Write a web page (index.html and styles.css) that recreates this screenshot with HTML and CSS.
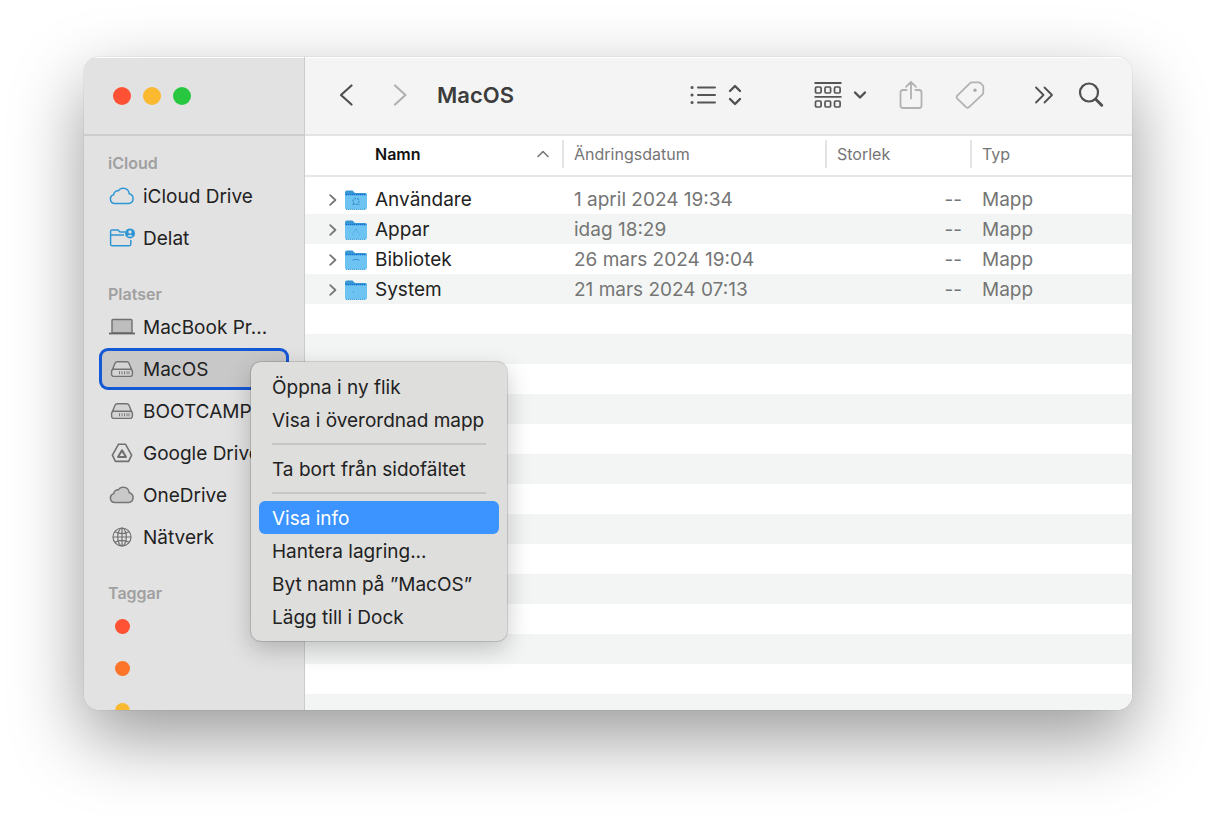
FILE: index.html
```html
<!DOCTYPE html>
<html lang="sv">
<head>
<meta charset="utf-8">
<meta name="viewport" content="width=device-width, initial-scale=1">
<title>MacOS</title>
<link rel="stylesheet" href="styles.css">
</head>
<body>
<svg class="defs" width="0" height="0" aria-hidden="true">
  <symbol id="drive" viewBox="0 0 24 18">
    <path d="M5.8 1.8h12.4l3.6 8.2H2.2zM3.6 9.5h16.8a2 2 0 0 1 2 2v3a2 2 0 0 1-2 2H3.6a2 2 0 0 1-2-2v-3a2 2 0 0 1 2-2z" fill="#d4d4d4" stroke="none"/>
    <path d="M1.8 11 5 3.2C5.4 2.3 6.2 1.8 7.2 1.8h9.6c1 0 1.8.5 2.2 1.4L22.2 11M3.8 9.2h16.4a2.2 2.2 0 0 1 2.2 2.2v2.8a2.2 2.2 0 0 1-2.2 2.2H3.8a2.2 2.2 0 0 1-2.2-2.2v-2.8a2.2 2.2 0 0 1 2.2-2.2z" fill="none" stroke="#727272" stroke-width="1.4"/>
    <path d="M9.5 11.3v3M12 11.3v3M14.5 11.3v3M17 11.3v3M19 11.3v3" stroke="#777" stroke-width="1"/>
  </symbol>
  <symbol id="cloud" viewBox="0 0 26 18">
    <path d="M6 16.6a4.6 4.6 0 0 1-1.3-9 4 4 0 0 1 4.5-3.7 6 6 0 0 1 11 2.9A5 5 0 0 1 19.9 16.6z" stroke-width="1.5" stroke-linejoin="round"/>
  </symbol>
  <symbol id="folder" viewBox="0 0 22 21">
    <path d="M0 2.5Q0 .5 2 .5h5.5L10 3h10q2 0 2 2v3H0z" fill="#3697d4"/>
    <path d="M0 5.2h22v12.6a2 2 0 0 1-2 2H2a2 2 0 0 1-2-2z" fill="#6dc3f2"/>
    <path d="M1 4.6h20" stroke="#1265d8" stroke-width="1" stroke-dasharray="1 1"/>
    <path d="M1 19.3h20" stroke="#419bd3" stroke-width="1" stroke-dasharray="1 1"/>
  </symbol>
  <symbol id="chevron" viewBox="0 0 8 12">
    <path d="m1.2 1.2 5.2 4.8-5.2 4.8" fill="none" stroke="#777" stroke-width="1.8" stroke-linecap="round" stroke-linejoin="round"/>
  </symbol>
</svg>

<main class="window">
  <aside class="sidebar">
    <div class="sidebar-top">
      <button class="light red" aria-label="Stäng"></button>
      <button class="light yellow" aria-label="Minimera"></button>
      <button class="light green" aria-label="Zooma"></button>
    </div>
    <nav class="places">
      <section class="group">
        <h2>iCloud</h2>
        <button class="place"><svg class="place-icon" width="26" height="18" fill="none" stroke="#2f96d6"><use href="#cloud"/></svg><span>iCloud Drive</span></button>
        <button class="place"><svg class="place-icon" width="26" height="20" viewBox="0 0 26 20" fill="none" stroke="#2f96d6" stroke-width="1.5">
          <path d="M16 4H11L9 2H3.200q-1.600 0-1.600 1.600v12.600q0 1.600 1.600 1.600h17q1.600 0 1.600-1.600V12M1.600 7H15"/>
          <circle cx="21" cy="5.400" r="5" fill="#2f96d6" stroke="none"/><circle cx="21" cy="3.900" r="1.600" fill="#e2e2e2" stroke="none"/><path d="M18.200 8.400q2.800-3.400 5.600 0z" fill="#e2e2e2" stroke="none"/></svg><span>Delat</span></button>
      </section>
      <section class="group">
        <h2>Platser</h2>
        <button class="place"><svg class="place-icon" width="28" height="18" viewBox="0 0 28 18"><path d="M4 2.500q0-1 1-1h18q1 0 1 1V15H4z" fill="#bdbdbd" stroke="#707070" stroke-width="1.400"/><path d="M1 15.500h26" stroke="#666" stroke-width="1.800"/></svg><span>MacBook Pr...</span></button>
        <button class="place selected"><svg class="place-icon" width="24" height="18"><use href="#drive"/></svg><span>MacOS</span></button>
        <button class="place"><svg class="place-icon" width="24" height="18"><use href="#drive"/></svg><span>BOOTCAMP</span></button>
        <button class="place"><svg class="place-icon" width="22" height="20" viewBox="0 0 22 20" fill="none" stroke="#707070" stroke-width="1.600" stroke-linejoin="round"><path d="M7.600 1.200h6.800l6.200 11-3 6.200H4.400l-3-6.200z"/><path d="m11 7.200 4 6.800H7z" stroke-width="2"/></svg><span>Google Drive</span></button>
        <button class="place"><svg class="place-icon" width="26" height="18" fill="#c9c9c9" stroke="#757575"><use href="#cloud"/></svg><span>OneDrive</span></button>
        <button class="place"><svg class="place-icon" width="20" height="20" viewBox="0 0 20 20" fill="none" stroke="#707070" stroke-width="1.200"><circle cx="10" cy="10" r="9"/><ellipse cx="10" cy="10" rx="4.300" ry="9"/><path d="M10 1v18M1 10h18M3 4.800q7 3.600 14 0M3 15.200q7-3.600 14 0"/></svg><span>Nätverk</span></button>
      </section>
      <section class="group">
        <h2>Taggar</h2>
        <button class="place" aria-label="Röd"><i class="tag tag-red"></i></button>
        <button class="place" aria-label="Orange"><i class="tag tag-orange"></i></button>
        <button class="place" aria-label="Gul"><i class="tag tag-yellow"></i></button>
      </section>
    </nav>
  </aside>

  <section class="content">
    <header class="toolbar">
      <button class="tool" aria-label="Bakåt"><svg width="14" height="24" viewBox="0 0 14 24" fill="none" stroke="#505050" stroke-width="2.200" stroke-linecap="round" stroke-linejoin="round"><path d="M12.500 2.500 2 12l10.500 9.500"/></svg></button>
      <button class="tool" aria-label="Framåt"><svg width="14" height="24" viewBox="0 0 14 24" fill="none" stroke="#b0b0b0" stroke-width="2.200" stroke-linecap="round" stroke-linejoin="round"><path d="m2 2.500 10.500 9.500L2 21.500"/></svg></button>
      <h1>MacOS</h1>
      <button class="tool view" aria-label="Visa som lista">
        <svg width="26" height="22" viewBox="0 0 26 22" stroke="#555" stroke-width="2" stroke-linecap="round"><path d="M8 3.500h17M8 11h17M8 18.500h17"/><path d="M2 3.500h.1M2 11h.1M2 18.500h.1" stroke-width="3"/></svg>
        <svg width="14" height="22" viewBox="0 0 14 22" fill="none" stroke="#505050" stroke-width="2.400" stroke-linecap="round" stroke-linejoin="round"><path d="m2 7 5-5 5 5M2 15l5 5 5-5"/></svg>
      </button>
      <button class="tool arrange" aria-label="Gruppera">
        <svg width="28" height="28" viewBox="0 0 28 28" fill="none" stroke="#555" stroke-width="1.700"><path d="M.5 2h27M.5 15.800h27" stroke-width="1.800"/><rect x="1.500" y="6" width="5.600" height="6" rx="1.200"/><rect x="11" y="6" width="5.600" height="6" rx="1.200"/><rect x="20.500" y="6" width="5.600" height="6" rx="1.200"/><rect x="1.500" y="20" width="5.600" height="6" rx="1.200"/><rect x="11" y="20" width="5.600" height="6" rx="1.200"/><rect x="20.500" y="20" width="5.600" height="6" rx="1.200"/></svg>
        <svg width="14" height="10" viewBox="0 0 14 10" fill="none" stroke="#505050" stroke-width="2.400" stroke-linecap="round" stroke-linejoin="round"><path d="m2 2.500 5 5 5-5"/></svg>
      </button>
      <button class="tool share" aria-label="Dela"><svg width="24" height="30" viewBox="0 0 24 30" fill="none" stroke="#b2b2b2" stroke-width="1.800" stroke-linecap="round" stroke-linejoin="round"><path d="M7.500 10H4q-2.500 0-2.500 2.500v13Q1.500 28 4 28h16q2.500 0 2.500-2.500v-13Q22.500 10 20 10h-3.500M12 18.500V1.800M7 6.800l5-5 5 5"/></svg></button>
      <button class="tool tagging" aria-label="Taggar"><svg width="30" height="30" viewBox="0 0 30 30" fill="none" stroke="#b2b2b2" stroke-width="1.800" stroke-linejoin="round"><path d="M14.800 3.300q1-1 2.400-1h6.500q1 0 1.700.7l2.100 2.200q.8.800.8 2v5q0 1.400-1 2.400L14 27.200q-1.500 1.400-3 0L2.300 18.700q-1.400-1.500 0-3z"/><circle cx="20" cy="10.200" r="1.700" fill="#aaa" stroke="none"/></svg></button>
      <button class="tool more" aria-label="Mer"><svg width="20" height="18" viewBox="0 0 20 18" fill="none" stroke="#505050" stroke-width="1.800" stroke-linecap="round" stroke-linejoin="round"><path d="m2 1.500 7.500 7.500L2 16.500M10.500 1.500 18 9l-7.500 7.500"/></svg></button>
      <button class="tool search" aria-label="Sök"><svg width="26" height="26" viewBox="0 0 26 26" fill="none" stroke="#505050" stroke-width="2.200" stroke-linecap="round"><circle cx="11" cy="10.500" r="9"/><path d="m17.700 17.200 6 6" stroke-width="3"/></svg></button>
    </header>

    <div class="list">
      <table>
        <colgroup><col class="col-name"><col class="col-date"><col class="col-size"><col></colgroup>
        <thead>
          <tr>
            <th class="name" aria-sort="ascending"><div class="head"><span>Namn</span><svg width="12" height="8" viewBox="0 0 12 8" fill="none" stroke="#777" stroke-width="1.600" stroke-linecap="round" stroke-linejoin="round"><path d="m1 6.500 5-5 5 5"/></svg></div></th>
            <th><div class="head">Ändringsdatum</div></th>
            <th><div class="head">Storlek</div></th>
            <th><div class="head">Typ</div></th>
          </tr>
        </thead>
        <tbody>
          <tr><td><div class="file"><button class="disclose" aria-label="Visa innehåll i Användare"><svg width="8" height="12"><use href="#chevron"/></svg></button><svg width="22" height="21" viewBox="0 0 22 21"><use href="#folder"/><path d="M7.500 14.500H10q-2-1.500-2-3.200a3 3 0 0 1 6 0q0 1.700-2 3.200h2.500" fill="none" stroke="#3a91cc" stroke-width="1.200" stroke-dasharray="2 1"/></svg><span>Användare</span></div></td><td>1 april 2024 19:34</td><td class="size">--</td><td>Mapp</td></tr>
          <tr><td><div class="file"><button class="disclose" aria-label="Visa innehåll i Appar"><svg width="8" height="12"><use href="#chevron"/></svg></button><svg width="22" height="21" viewBox="0 0 22 21"><use href="#folder"/><path d="m11 9-3.500 5.500M11 9l3.500 5.500" fill="none" stroke="#3a91cc" stroke-width="1" stroke-dasharray="1 2"/></svg><span>Appar</span></div></td><td>idag 18:29</td><td class="size">--</td><td>Mapp</td></tr>
          <tr><td><div class="file"><button class="disclose" aria-label="Visa innehåll i Bibliotek"><svg width="8" height="12"><use href="#chevron"/></svg></button><svg width="22" height="21" viewBox="0 0 22 21"><use href="#folder"/><path d="M7.500 10.500 9 9.500h4l1.500 1" fill="none" stroke="#3a91cc" stroke-width="1"/></svg><span>Bibliotek</span></div></td><td>26 mars 2024 19:04</td><td class="size">--</td><td>Mapp</td></tr>
          <tr><td><div class="file"><button class="disclose" aria-label="Visa innehåll i System"><svg width="8" height="12"><use href="#chevron"/></svg></button><svg width="22" height="21" viewBox="0 0 22 21"><use href="#folder"/><path d="M8 12h1" stroke="#3a91cc"/></svg><span>System</span></div></td><td>21 mars 2024 07:13</td><td class="size">--</td><td>Mapp</td></tr>
        </tbody>
      </table>
    </div>
  </section>

  <div class="menu" role="menu">
    <button role="menuitem">Öppna i ny flik</button>
    <button role="menuitem">Visa i överordnad mapp</button>
    <hr>
    <button role="menuitem">Ta bort från sidofältet</button>
    <hr>
    <button role="menuitem" class="active">Visa info</button>
    <button role="menuitem">Hantera lagring...</button>
    <button role="menuitem">Byt namn på ”MacOS”</button>
    <button role="menuitem">Lägg till i Dock</button>
  </div>
</main>
</body>
</html>
```
FILE: styles.css
```css
* { box-sizing: border-box; }

body {
  margin: 0;
  min-height: 100vh;
  padding: 57px 84px 110px;
  display: flex;
  background: #fff;
  color: #222;
  font-family: Inter, "Liberation Sans", sans-serif;
  font-size: 19px;
  line-height: 30px;
}

button {
  margin: 0;
  padding: 0;
  border: 0;
  background: none;
  color: inherit;
  font: inherit;
}

svg { display: block; flex: none; }
.defs { position: absolute; }

.window {
  position: relative;
  flex: 1;
  min-width: 0;
  display: flex;
  border-radius: 15px;
  box-shadow: 0 0 1px rgba(0, 0, 0, .4), 0 28px 72px rgba(0, 0, 0, .4);
}

/* Sidebar */
.sidebar {
  flex: none;
  width: 221px;
  display: flex;
  flex-direction: column;
  overflow: hidden;
  background: #e2e2e2;
  border-right: 1px solid #cbcbcb;
  border-radius: 15px 0 0 15px;
}

.sidebar-top {
  flex: none;
  height: 79px;
  padding-left: 29px;
  display: flex;
  align-items: center;
  gap: 12px;
  border-top: 1px solid #fff;
  border-bottom: 2px solid #cdcdcd;
}

.light {
  width: 18px;
  height: 18px;
  border-radius: 50%;
}
.red { background: #ff5234; }
.yellow { background: #fab92f; }
.green { background: #27c840; }

.places {
  flex: 1 1 0;
  min-height: 0;
  overflow: hidden;
  padding: 15px 15px 0;
  display: flex;
  flex-direction: column;
  gap: 23px;
}

.group h2 {
  margin: 0;
  padding-left: 9px;
  font-size: 16px;
  font-weight: 600;
  line-height: 24px;
  color: #a0a0a0;
}

.place {
  width: 100%;
  height: 42px;
  padding-left: 8px;
  display: grid;
  grid-template-columns: 30px 1fr;
  align-items: center;
  gap: 6px;
  text-align: left;
  white-space: nowrap;
}

.place span { padding-top: 2px; }

.place-icon, .tag { justify-self: center; }

.selected {
  background: #c8c8c8;
  border-radius: 9px;
  box-shadow: inset 0 0 0 3px #1558d6;
}

.tag {
  width: 15px;
  height: 15px;
  border-radius: 50%;
}
.tag-red { background: #ff5234; }
.tag-orange { background: #fc7529; }
.tag-yellow { background: #fab92f; }

/* Toolbar */
.content {
  flex: 1;
  min-width: 0;
  display: flex;
  flex-direction: column;
  overflow: hidden;
  background: #fff;
  border-radius: 0 15px 15px 0;
}

.toolbar {
  flex: none;
  height: 79px;
  padding: 0 24px 2px;
  display: flex;
  align-items: center;
  background: #f4f4f4;
  border-top: 1px solid #fff;
  border-bottom: 2px solid #e4e4e4;
}

.toolbar h1 {
  margin: 0 auto 0 0;
  font-size: 22px;
  font-weight: 600;
  color: #3c3c3c;
}

.tool {
  width: 34px;
  height: 34px;
  margin-right: 20px;
  display: flex;
  align-items: center;
  justify-content: center;
}
.view { width: 52px; margin-right: 72px; justify-content: space-between; }
.arrange { width: 53px; margin-right: 27px; justify-content: space-between; }
.share { margin-right: 25px; }
.tagging { margin-right: 40px; }
.more { margin-right: 13px; }
.search { margin-right: 0; }

/* File list */
.list {
  flex: 1;
  background: repeating-linear-gradient(#fff 0 30px, #f3f5f4 30px 60px) 0 48px no-repeat;
}

table {
  width: 100%;
  table-layout: fixed;
  border-collapse: collapse;
}
.col-name { width: 257px; }
.col-date { width: 263px; }
.col-size { width: 145px; }

th {
  height: 40px;
  padding: 0 0 4px;
  border-bottom: 2px solid #e6e6e6;
  font-size: 16px;
  font-weight: 400;
  text-align: left;
  color: #757575;
}
.head {
  height: 28px;
  padding-left: 10px;
  border-left: 2px solid #e4e4e4;
  line-height: 28px;
}
.name .head {
  padding: 0 13px 0 70px;
  display: flex;
  align-items: center;
  justify-content: space-between;
  border-left: 0;
  font-weight: 600;
  color: #111;
}

tbody::before {
  content: "";
  display: block;
  height: 8px;
}

td {
  height: 30px;
  padding: 0 0 0 12px;
  color: #757575;
  white-space: nowrap;
}
td:first-child { padding-left: 24px; color: #222; }
td.size { padding-right: 8px; text-align: right; }

.file { display: flex; align-items: center; }
.file > svg { margin: 0 8px; }

/* Context menu */
.menu {
  position: absolute;
  left: 167px;
  top: 305px;
  width: 256px;
  padding: 8px;
  background: #dededd;
  border-radius: 10px;
  box-shadow: 0 0 0 1px rgba(0, 0, 0, .13), 0 8px 24px rgba(0, 0, 0, .22);
}

.menu button {
  display: block;
  width: 100%;
  height: 33px;
  padding: 2px 0 0 13px;
  border-radius: 6px;
  text-align: left;
  white-space: nowrap;
}

.menu .active { background: #3b94ff; color: #fff; }

.menu hr {
  height: 2px;
  margin: 7px 13px;
  border: 0;
  background: #c6c6c6;
}
```
